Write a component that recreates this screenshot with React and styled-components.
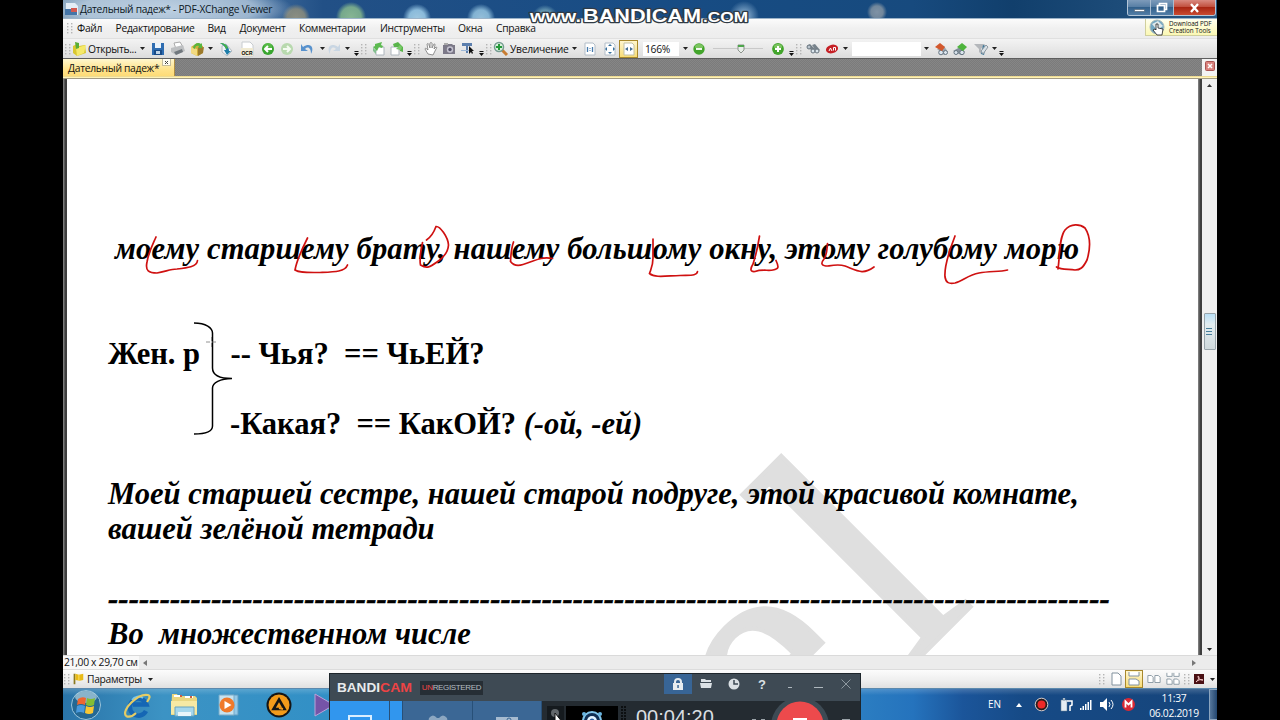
import React from 'react';
import styled, { createGlobalStyle } from 'styled-components';

const GlobalStyle = createGlobalStyle`
  * { box-sizing: border-box; }
  body { margin: 0; background: #000; overflow: hidden; }
  svg { display: block; flex: none; }
`
const Screen = styled.div`
  position: relative;
  width: 1280px;
  height: 720px;
  padding: 0 63px;
  background: #000;
  overflow: hidden;
  font-family: 'Open Sans', 'Noto Sans', sans-serif;
  font-size: 10.3px;
  letter-spacing: -0.3px;
  color: #111;
`
const Desktop = styled.div`
  display: flex;
  flex-direction: column;
  width: 1154px;
  height: 720px;
`
const TitleBar = styled.div`
  display: flex;
  justify-content: space-between;
  height: 19px;
  padding-right: 1px;
  border-bottom: 1px solid #9cb3c8;
  background:
    radial-gradient(ellipse 125px 26px at 105px 9px, rgba(214,228,240,.8), rgba(214,228,240,.6) 70%, transparent),
    radial-gradient(circle at 233px 18px, #8c8f83 0, #7d857f 9px, transparent 14px),
    radial-gradient(circle at 288px 17px, #86b593 0, #76a88c 10px, transparent 15px),
    radial-gradient(circle at 354px 18px, #9dc6df 0, #8abada 8px, transparent 14px),
    radial-gradient(circle at 418px 18px, #94bed9 0, #82b2d2 8px, transparent 14px),
    radial-gradient(circle at 482px 18px, #719eb6 0, #5f91ad 8px, transparent 13px),
    radial-gradient(circle at 681px 16px, #9dc0dc 0, transparent 15px),
    radial-gradient(circle at 814px 12px, #7f92a5 0, #71879c 6px, transparent 10px),
    linear-gradient(90deg, #7596b4 0, #416d9d 190px, #225086 260px, #174c84 600px, #174a7e 850px, #113f6c 950px, #275784 1154px);
`
const TitleText = styled.div`
  display: flex;
  align-items: center;
  gap: 2px;
  height: 18px;
  padding-left: 2px;
  color: #0b1723;
  font-size: 10.2px;
  letter-spacing: -0.27px;
  white-space: nowrap;
`
const WindowButtons = styled.div`
  display: flex;
  height: 16px;
  border: 1px solid #b4c6d8;
  border-top: 0;
  border-radius: 0 0 3px 3px;
  overflow: hidden;
`
const WindowButton = styled.div`
  display: flex;
  align-items: center;
  justify-content: center;
  width: ${p => p.$close ? 41 : 23}px;
  border-right: ${p => p.$close ? 0 : '1px solid #a9bdd1'};
  background: ${p => p.$close
    ? 'linear-gradient(#d98a80, #c2503f 45%, #a92613 50%, #c94b31)'
    : 'linear-gradient(#7d9bba, #587fa5 45%, #32608b 50%, #527ea7)'};
`
const MenuBar = styled.div`
  display: flex;
  height: 20px;
  background: linear-gradient(#fbfbfb, #f0f0f0 50%, #ededed);
  border-bottom: 1px solid #e0e0e0;
`
const MenuItem = styled.div`
  width: ${p => p.$w}px;
  line-height: 19px;
  white-space: nowrap;
`
const Promo = styled.div`
  display: flex;
  gap: 3px;
  width: 72px;
  height: 17px;
  margin-left: auto;
  padding-left: 3px;
  border: 1px solid #d0cf9e;
  border-top: 0;
  border-right: 0;
  background: linear-gradient(#fffff0, #fbf8b4);
  font-size: 6.3px;
  line-height: 7px;
  letter-spacing: -0.05px;
  white-space: nowrap;
`
const PromoText = styled.div`
  padding-top: 1px;
`
const ToolBar = styled.div`
  display: flex;
  align-items: center;
  height: 19px;
  background: linear-gradient(#f3f3f3, #e6e6e6 60%, #dcdcdc);
`
const Slot = styled.div`
  display: flex;
  flex: none;
  align-items: center;
  justify-content: center;
  width: ${p => p.$w}px;
  height: 18px;
  ${p => p.$active && `
    border: 1px solid #a8882c;
    background: linear-gradient(#fff6cf, #f8dc76);
  `}
`
const ToolLabel = styled.div`
  flex: none;
  width: ${p => p.$w}px;
  padding-left: 2px;
  line-height: 18px;
  white-space: nowrap;
`
const Field = styled.div`
  flex: none;
  width: ${p => p.$w}px;
  height: 14px;
  margin-left: ${p => p.$gap || 0}px;
  padding-left: 2px;
  background: #fff;
  line-height: 14px;
`
const TabStrip = styled.div`
  display: flex;
  justify-content: space-between;
  height: 18px;
  border-top: 1px solid #5e5e5e;
  background: repeating-conic-gradient(#7b7b7b 0 25%, #868686 0 50%) 0 0 / 2px 2px;
`
const Tab = styled.div`
  display: flex;
  justify-content: space-between;
  width: 112px;
  padding-left: 5px;
  padding-right: 3px;
  background: linear-gradient(#fff7cf, #ffe38c 60%, #fddb77);
  border-right: 1px solid #b18f43;
  line-height: 18px;
  white-space: nowrap;
`
const TabClose = styled.div`
  display: flex;
  align-items: center;
  justify-content: center;
  width: 9px;
  height: 7px;
  border: 1px solid #c5bd9c;
  border-top: 0;
  background: #fffdf2;
`
const StripClose = styled.div`
  display: flex;
  align-items: center;
  justify-content: center;
  width: 15px;
  height: 17px;
  padding-bottom: 3px;
  background: #f3f3f3;
`
const TabLine = styled.div`
  height: 3px;
  border-top: 1px solid #eedb92;
  border-bottom: 1px solid #a39c85;
  background: #fff3b8;
`
const Viewer = styled.div`
  display: flex;
  height: 576px;
`
const Edge = styled.div`
  width: ${p => p.$w}px;
  background: linear-gradient(90deg, #8b8b8b, #3e3e3e 60%, #3e3e3e);
`
const Page = styled.div`
  position: relative;
  width: 1131px;
  padding: 153px 0 0 41px;
  background: #fff;
  overflow: hidden;
`
const Overlay = styled.svg`
  position: absolute;
  top: 0;
  left: 0;
`
const Line = styled.div`
  position: relative;
  height: 35px;
  padding-left: ${p => p.$indent || 0}px;
  font-family: 'Liberation Serif', serif;
  font-size: 30.6px;
  font-weight: bold;
  font-style: ${p => p.$italic ? 'italic' : 'normal'};
  letter-spacing: ${p => p.$ls || 0}px;
  line-height: 35px;
  color: #000;
  white-space: pre;
`
const Dashes = styled(Line)`
  -webkit-text-stroke: 0.5px #000;
`
const ScrollBar = styled.div`
  display: flex;
  flex-direction: column;
  align-items: center;
  justify-content: space-between;
  width: 15px;
  padding: 4px 0;
  background: #f0f0f0;
`
const Thumb = styled.div`
  display: flex;
  align-items: center;
  justify-content: center;
  width: 12px;
  height: 37px;
  margin-top: -72px;
  border: 1px solid #98a4aa;
  border-radius: 1px;
  background: linear-gradient(#b9dff6, #e3edf0 30%, #cfd9dc);
`
const StatusBar = styled.div`
  display: flex;
  align-items: center;
  height: 14px;
  border-top: 1px solid #dadada;
  background: #ececec;
`
const StatusSize = styled.div`
  width: 76px;
  padding-left: 1px;
  background: #f8f8f8;
  line-height: 13px;
  white-space: nowrap;
`
const OptionsBar = styled.div`
  display: flex;
  align-items: center;
  height: 19px;
  border-top: 1px solid #dcdcdc;
  background: linear-gradient(#fcfcfc, #eee 60%, #e0e0e0);
`
const Spacer = styled.div`
  flex: 1;
`
const TaskBar = styled.div`
  display: flex;
  align-items: center;
  height: 32px;
  border-top: 1px solid #5c89ad;
  background:
    linear-gradient(rgba(255,255,255,.18), transparent 20%),
    linear-gradient(90deg, #2a74a8 0, #3c93c4 100px, #3290c6 260px, #2c7fc2 790px, #2573bd 850px, #1b559a 900px, #164a86 960px, #16457b 1140px);
`
const TaskIcon = styled.div`
  display: flex;
  flex: none;
  justify-content: center;
  width: ${p => p.$w}px;
`
const Language = styled.div`
  width: 28px;
  color: #fff;
  font-size: 10px;
  line-height: 20px;
  padding-bottom: 1px;
  letter-spacing: 0;
`
const Clock = styled.div`
  width: 58px;
  padding: 2px 0 0 4px;
  color: #fff;
  line-height: 15px;
  text-align: center;
  white-space: nowrap;
  letter-spacing: -0.3px;
`
const ShowDesktop = styled.div`
  width: 8px;
  height: 31px;
  margin-left: 8px;
  border: 1px solid #8ba5bf;
  border-right: 0;
  background: linear-gradient(90deg, #56779c, #23466f);
`
const Watermark = styled.svg`
  position: absolute;
  top: 2px;
  left: 520px;
  letter-spacing: 0;
`
const Recorder = styled.div`
  position: absolute;
  top: 673px;
  left: 329px;
  width: 532px;
  height: 60px;
  border: 1px solid #1d252b;
  background: #242b31;
  letter-spacing: 0;
`
const RecorderHeader = styled.div`
  display: flex;
  align-items: center;
  height: 27px;
  padding-left: 7px;
  background: #3e4a54;
`
const Unregistered = styled.div`
  width: 63px;
  height: 14px;
  margin: 0 0 0 7px;
  background: #262e35;
  color: #b5bcc1;
  font: 8px/14px 'Liberation Sans', sans-serif;
  letter-spacing: -0.35px;
  text-align: center;
  span { color: #ed4545; }
`
const HeaderButton = styled.div`
  display: flex;
  align-items: center;
  justify-content: center;
  width: 28px;
  height: 20px;
  align-self: flex-start;
  background: ${p => p.$active ? '#386596' : 'transparent'};
  color: #dbe1e5;
  font: bold 13px 'Liberation Sans', sans-serif;
`
const RecorderBody = styled.div`
  display: flex;
  height: 31px;
`
const ModeTab = styled.div`
  display: flex;
  justify-content: center;
  width: ${p => p.$w}px;
  padding-top: 14px;
  border-right: 1px solid #285078;
  background: ${p => p.$on ? '#3196ee' : '#3b6795'};
`
const Preview = styled.div`
  display: flex;
  gap: 2px;
  width: 93px;
  padding: 5px 0 0 5px;
`
const Timer = styled.div`
  width: 84px;
  padding: 4px 0 0 1px;
  color: #d9dee1;
  font: 20px/24px 'Liberation Sans', sans-serif;
  white-space: nowrap;
`

const Grip = () => (
  <svg width="6" height="12" fill="#b5b5b5">
    {[1, 4, 7, 10].map(y => <React.Fragment key={y}><rect x="0" y={y} width="1.4" height="1.4" /><rect x="4" y={y} width="1.4" height="1.4" /></React.Fragment>)}
  </svg>
)
const Arrow = () => <svg width="5" height="3"><path d="M0 0h5L2.5 3z" fill="#222" /></svg>
const More = () => <svg width="5" height="18"><path d="M.5 11h4v1h-4zM0 13h5L2.500 16z" fill="#111" /></svg>

const icons = {
  folder: <><path d="M1 5l4-2 2 2 6-1 1 8-9 3-4-3z" fill="#d9c72f" /><path d="M4 7l10-3-2 8-7 3z" fill="#f5e96a" /><path d="M3 1l4 1v5l-3 1z" fill="#58ad35" /></>,
  save: <><path d="M2 2h12v12H2z" fill="#2e6cb0" /><path d="M5 2h6v5H5z" fill="#e9f2fa" /><path d="M4 9h8v5H4z" fill="#194b87" /><path d="M6 10h4v3H6z" fill="#bfd4e8" /></>,
  print: <><path d="M4 2l6-1 3 5-7 2z" fill="#fff" stroke="#aaa" /><path d="M1 7l12-3 2 6-9 4-5-3z" fill="#bdbfc1" /><path d="M4 11l8-3 1 3-7 3z" fill="#70777d" /></>,
  export: <><path d="M2 6l6-4 6 3v7l-6 3-6-3z" fill="#d0ad38" /><path d="M2 6l6 2v7l-6-3z" fill="#f2d980" /><path d="M9 7l6-1-1 6-5 3z" fill="#9c7a2c" /><path d="M4 7c1-5 6-6 8-4l1-1v5H9l1-2C8 4 6 5 6 8z" fill="#57b53e" /></>,
  convert: <><path d="M5 5l4-2 6 7-5 5-5-4z" fill="#eef2f6" stroke="#b4bac0" /><path d="M3 2c6 0 9 4 9 8h2l-4 4-3-5h2c0-3-3-5-6-7z" fill="#1e7da8" /><path d="M3 2c4 0 7 2 8 5l-2 1C8 5 6 3 3 2z" fill="#46b344" /></>,
  ocr: <><path d="M3 1h8l3 3v11H3z" fill="#fff" stroke="#c8ccd0" /><path d="M2 7h12v8H2z" fill="#f0ead2" /><text x="2.500" y="13.500" fontSize="6" letterSpacing="0" fontWeight="bold" fontFamily="Liberation Sans, sans-serif" textLength="11" lengthAdjust="spacingAndGlyphs">OCR</text></>,
  back: <><circle cx="8" cy="8" r="6" fill="#39a52f" /><circle cx="8" cy="6" r="4" fill="#71cf59" opacity=".5" /><path d="M12 8H5m3-3L5 8l3 3" stroke="#fff" strokeWidth="2" fill="none" /></>,
  forward: <><circle cx="8" cy="8" r="6" fill="#b8d9ae" /><path d="M4 8h7M8 5l3 3-3 3" stroke="#f4fbf1" strokeWidth="2" fill="none" /></>,
  undo: <path d="M2 3v7h7L6 8c3-3 6-1 6 5 4-7-1-12-8-7z" fill="#5791cd" />,
  redo: <path d="M14 3v7H7l3-2c-3-3-6-1-6 5-4-7 1-12 8-7z" fill="#c9d6e3" />,
  rotL: <><path d="M6 6h8v8H6z" fill="#fff" stroke="#aeb6bd" /><path d="M5 3l7-2-1 3 2 1-1 2-3-1-2 4-4-4 2-1z" fill="#5cba50" /><path d="M3 5v5l3 3V9L4 8z" fill="#84bf90" /></>,
  rotR: <><path d="M2 6h8v8H2z" fill="#fff" stroke="#aeb6bd" /><path d="M4 3l5-2 5 5v5l-3-1-1-4H5z" fill="#58b44a" /><path d="M7 8l5 1 1-3-2-2z" fill="#79ca68" /></>,
  hand: <path d="M5 13L2 8c0-1 1-1 3 1L4 3c1-1 2 0 2 1l1 3V2c1-1 2 0 2 0v5l2-4c1 0 1 0 1 1l-1 4 2-2c1 0 1 1 0 2l-2 4-1 2z" fill="#fff" stroke="#777" strokeWidth=".8" />,
  camera: <><path d="M2 4h4l1-1h4l1 1h2v9H2z" fill="#7c7988" /><circle cx="9" cy="8.500" r="3.200" fill="#c4c2cf" /><circle cx="9" cy="8.500" r="1.700" fill="#55536a" /><path d="M3 2h4v2H3z" fill="#aaa" /></>,
  select: <><path d="M2 2h10v3H8v7H6V5H2z" fill="#5c7fae" /><path d="M1 9h10v1H1z" fill="#9cb7d7" /><path d="M9 5v8l2-2 1 2 1-1-1-2h2z" fill="#111" /></>,
  zoom: <><path d="M9 9l5 5" stroke="#c87d33" strokeWidth="3" /><circle cx="6" cy="6" r="4.500" fill="#d8f1dc" stroke="#759b91" strokeWidth="1.500" /><path d="M3 6h6M6 3v6" stroke="#24993a" strokeWidth="2" /></>,
  actual: <><path d="M3 2h8l2 2v10H3z" fill="#fff" stroke="#b2bdc8" /><path d="M5.500 6v5M10.500 6v5" stroke="#477bad" strokeWidth="1.300" /><path d="M8 7v1M8 9v1" stroke="#477bad" /></>,
  fit: <><path d="M3 2h8l2 2v10H3z" fill="#fff" stroke="#b2bdc8" /><path d="M8 3l2 2H6zM8 13l2-2H6zM3 8l2-2v4zM13 8l-2-2v4z" fill="#38719f" /></>,
  width: <><path d="M3 2h8l2 2v10H3z" fill="#fff" stroke="#c2c1a8" /><path d="M4 8l3-2v4zM12 8L9 6v4z" fill="#476f92" /></>,
  minus: <><circle cx="8" cy="8" r="5.700" fill="#43a52c" /><ellipse cx="8" cy="5.500" rx="4" ry="2.500" fill="#a1db83" opacity=".6" /><path d="M5 8h6" stroke="#fff" strokeWidth="1.800" /></>,
  plus: <><circle cx="8" cy="8" r="5.900" fill="#43a52c" /><ellipse cx="8" cy="5.500" rx="4" ry="2.500" fill="#a1db83" opacity=".6" /><path d="M5 8h6M8 5v6" stroke="#fff" strokeWidth="2" /></>,
  find: <><path d="M2 5l3-2 5 5-2 3zM7 4l3-1 5 6-3 2z" fill="#77828b" /><circle cx="4" cy="6" r="2" fill="#bac4cd" stroke="#68747e" /><circle cx="8" cy="10" r="2" fill="#dce6ed" stroke="#68747e" /><circle cx="12" cy="10" r="2" fill="#dce6ed" stroke="#68747e" /></>,
  ask: <><ellipse cx="8" cy="8" rx="6.200" ry="4.200" transform="rotate(-15 8 8)" fill="#c51f25" /><path d="M5 10l1.500-3L8 10M9.500 9.500v-3h2v3" fill="none" stroke="#fff" strokeWidth="1" /></>,
  findRed: <><path d="M4 8l7-3 4 6-4 3z" fill="#9ba4ac" /><circle cx="8" cy="11.500" r="2.300" fill="#dbe5ee" stroke="#667581" /><circle cx="12.500" cy="11.500" r="2" fill="#dbe5ee" stroke="#667581" /><path d="M2 6l5-4 5 4-3 4z" fill="#d3582d" /></>,
  findGreen: <><path d="M1 10l7-4 5 5-4 3z" fill="#84909a" /><circle cx="4" cy="11.500" r="2" fill="#dbe5ee" stroke="#667581" /><circle cx="10" cy="11.500" r="2.200" fill="#dbe5ee" stroke="#667581" /><path d="M5 6l5-4 5 4-4 4z" fill="#4eb43c" /></>,
  tools: <><path d="M1 3h11L8 8v5L6 11V8z" fill="#b4b7bb" /><path d="M10 4l3 1-2 9-3-1z" fill="#3d7799" /><path d="M8 10l5-6 2 2-5 7z" fill="#d9e2e8" stroke="#9099a1" /></>,
  flag: <><path d="M4 2v12" stroke="#8b7a21" strokeWidth="2" /><path d="M5 2l4 1 5-1v7l-4 1-5-1z" fill="#e8ba17" /><path d="M9 3v7" stroke="#ffe46a" /></>,
  page: <path d="M4 2h6l3 3v9H4z" fill="#fff" stroke="#82929e" />,
  pages: <path d="M3 1v4h10V1M3 14V8h7l3 2v4z" fill="#fff" stroke="#82929e" />,
  facing: <path d="M1 4h4l2 2v6H1zM9 4h4l2 2v6H9z" fill="#fff" stroke="#82929e" />,
  facingRow: <path d="M1 1v4h6V1M9 1v4h6V1M1 14V8h4l2 2v4zM9 14V8h4l2 2v4z" fill="#fff" stroke="#82929e" />,
  pdf: <><path d="M3 3h10v10H3z" fill="#4a1014" /><path d="M5 11c3-3 4-5 2-6 0 3 2 4 5 4-3-1-5 0-7 2z" fill="none" stroke="#f2c6c6" /></>,
}

const Icon = ({ name, size = 16 }) => <svg width={size} height={size} viewBox="0 0 16 16">{icons[name]}</svg>

const menu = [['Файл', 38.5], ['Редактирование', 92], ['Вид', 32], ['Документ', 59.5], ['Комментарии', 81], ['Инструменты', 78], ['Окна', 38], ['Справка', 50]]

const tools = [
  ['grip', 10], ['folder', 13], ['text', 50, 'Открыть...'], ['arrow', 12], ['save', 20], ['print', 19], ['export', 19], ['arrow', 8],
  ['convert', 22], ['ocr', 22], ['back', 20], ['forward', 18], ['undo', 22], ['arrow', 8], ['redo', 16], ['arrow', 10], ['more', 8],
  ['grip', 8], ['rotL', 19], ['rotR', 19], ['more', 6], ['grip', 10], ['hand', 17], ['camera', 20], ['select', 18], ['more', 8],
  ['grip', 8], ['zoom', 15], ['text', 61, 'Увеличение'], ['arrow', 10], ['actual', 22], ['fit', 18], ['width', 19, true],
  ['field', 36, '166%', 5], ['arrow', 12], ['minus', 16], ['slider', 62], ['plus', 18], ['more', 8], ['grip', 8],
  ['find', 19], ['ask', 20], ['arrow', 6], ['field', 69, '', 4], ['arrow', 10], ['findRed', 19], ['findGreen', 20], ['tools', 22], ['arrow', 5], ['more', 8],
]

const Tool = ({ item: [kind, w, extra, gap] }) => {
  if (kind === 'text') return <ToolLabel $w={w}>{extra}</ToolLabel>
  if (kind === 'field') return <Field $w={w} $gap={gap}>{extra}</Field>
  return (
    <Slot $w={w} $active={extra}>
      {kind === 'grip' && <Grip />}
      {kind === 'arrow' && <Arrow />}
      {kind === 'more' && <More />}
      {kind === 'slider' && (
        <svg width="50" height="12">
          <path d="M0 5.500h50" stroke="#c9c9c9" />
          <path d="M25 2h6v5l-3 3-3-3z" fill="#e9eee9" stroke="#8d948d" />
          <path d="M25 2h6v2h-6z" fill="#4ea54b" />
        </svg>
      )}
      {icons[kind] && <Icon name={kind} />}
    </Slot>
  )
}

const ink = [
  'M156 237C152 246 149 251 147 262C145 271 149 273 157 273C165 272 170 269 177 269C187 268 197 267 197.500 260.500',
  'M307.500 238C302 249 297 259 295 270C299 273 307 272.500 320 272.500C334 272 345 272 347.500 265',
  'M426.500 240C431 237 434 232 436 226.500C440 226 448 237 448.500 245C448 253 443 258 437 262C430 267 427 269 420.500 265C419 258 421 252 422.500 242.500',
  'M513.500 242C511 249 511 255 510.500 261.500C513 265 518 266 523 264.500C533 262 540 256 552.500 258.500',
  'M653 239V258C653 266 651 269 649.500 273.500C655 278 665 276 680 275.500C690 275 697 276 697.500 271.500',
  'M759.500 236C758 246 756 255 753 264C750 269 750 272 755 271.500C762 269 768 271 773 270C779 269 779 267 776 260.500',
  'M827.500 243.500C827 249 827 255 824 259C820 264 822 266 828 266C834 265 839 264 845 266C858 271 863 275 874 267',
  'M955 236C950 249 944 266 945 277C946 283 949 284 955 283C963 281 968 275 979 273C990 271 999 272 1007.500 270',
  'M1058 269C1060 255 1059 238 1065 230C1071 223 1080 224 1085 228C1091 237 1090 250 1087 260C1083 268 1080 270 1075 270C1068 269 1061 270 1056.500 267',
]

const TaskIcons = () => (
  <>
    <TaskIcon $w={46}>
      <svg width="32" height="32" viewBox="0 0 32 32">
        <circle cx="16" cy="16" r="14.500" fill="#246894" stroke="#9bc5dc" />
        <ellipse cx="16" cy="8" rx="11" ry="6" fill="#b5d4e3" opacity=".7" />
        <path d="M8 10q4-3 8-1l-1 7q-4-2-8 0z" fill="#ef6631" /><path d="M17 9q4 2 8 0l-1 7q-4 2-8 0z" fill="#83bd35" />
        <path d="M7 17q4-2 8 0l-1 7q-4-2-8 0z" fill="#4999dd" /><path d="M16 17q4 2 8 0l-1 7q-4 2-8 0z" fill="#fac732" />
      </svg>
    </TaskIcon>
    <TaskIcon $w={56}>
      <svg width="28" height="28" viewBox="0 0 28 28">
        <path d="M23 20A8.500 8.500 0 1 1 23.500 13.500H10" fill="none" stroke="#1566b4" strokeWidth="4.500" />
        <path d="M9 9a8 8 0 0 1 11-2" fill="none" stroke="#76c7ef" strokeWidth="2" />
        <path d="M3 25C-2 19 15 2 25 4c3 1 1 4-1 7M3 25c4 2 8-1 10-3" fill="none" stroke="#e5cc65" strokeWidth="2.200" />
      </svg>
    </TaskIcon>
    <TaskIcon $w={38}>
      <svg width="29" height="28" viewBox="0 0 29 28">
        <path d="M2 3h5l1 2h17l2 2v17H1z" fill="#e9d680" /><path d="M4 5h7M15 6h8" stroke="#fff" strokeWidth="2" /><path d="M10 5h2M20 6h2" stroke="#ce5c43" strokeWidth="2" />
        <path d="M1 10h26v13H1z" fill="#f6e9a4" /><path d="M5 16h19v9H5z" fill="#a5d7ed" stroke="#69a4bf" /><path d="M8 21h13v4H8z" fill="#e8f5fa" />
      </svg>
    </TaskIcon>
    <TaskIcon $w={50}>
      <svg width="24" height="24" viewBox="0 0 24 24">
        <path d="M8 2h14v20H8z" fill="#94c9e8" stroke="#619cc1" /><path d="M3 2h15v20H3z" fill="#c5e2f0" stroke="#75aac8" />
        <circle cx="11" cy="12" r="7.500" fill="#ef792b" /><path d="M8.500 8l7 4-7 4z" fill="#fff" />
      </svg>
    </TaskIcon>
    <TaskIcon $w={52}>
      <svg width="28" height="28" viewBox="0 0 28 28">
        <circle cx="14" cy="14" r="12.500" fill="#151515" /><circle cx="14" cy="14" r="10.500" fill="#f39b1b" />
        <path d="M14 8.500l5.500 9.500h-11z" fill="none" stroke="#151515" strokeWidth="2.600" /><path d="M14 17l4 1" stroke="#f39b1b" strokeWidth="2" />
      </svg>
    </TaskIcon>
    <TaskIcon $w={36}>
      <svg width="24" height="24"><path d="M4 1l19 11L4 23z" fill="#7554a8" stroke="#b9a3d8" /></svg>
    </TaskIcon>
  </>
)

const App = () => (
  <Screen>
    <GlobalStyle />
    <Desktop>
      <TitleBar>
        <TitleText>
          <svg width="13" height="13" viewBox="0 0 13 13"><path d="M1 0h9l3 3v9H1z" fill="#e3edf6" /><path d="M0 6h12v6H0z" fill="#4475a8" /><path d="M6 5h6v4H6z" fill="#d35950" /></svg>
          Дательный падеж* - PDF-XChange Viewer
        </TitleText>
        <WindowButtons>
          <WindowButton><svg width="13" height="10"><path d="M1.500 6.500h10v2h-10z" fill="#fff" stroke="#46596d" strokeWidth=".6" /></svg></WindowButton>
          <WindowButton><svg width="14" height="12"><path d="M4.500 3V1.500h7v6H10M2.500 3.500h7v6h-7z" fill="none" stroke="#fff" strokeWidth="1.700" /></svg></WindowButton>
          <WindowButton $close><svg width="12" height="10"><path d="M2 1l7 8M9 1L2 9" stroke="#fff" strokeWidth="2.300" /></svg></WindowButton>
        </WindowButtons>
      </TitleBar>
      <MenuBar>
        <Slot $w={14}><Grip /></Slot>
        {menu.map(([label, w]) => <MenuItem key={label} $w={w}>{label}</MenuItem>)}
        <Promo>
          <svg width="17" height="17" viewBox="0 0 17 17"><circle cx="8" cy="8" r="7" fill="#71a7c2" stroke="#aab9bb" /><path d="M3 5l6-3 5 5-6 4z" fill="#dfe8e9" /><path d="M8 16l-4-5 2-1 1 1V5h2v4l5 1-1 6z" fill="#fff" stroke="#222" strokeWidth=".8" /></svg>
          <PromoText>Download PDF<br />Creation Tools</PromoText>
        </Promo>
      </MenuBar>
      <ToolBar>{tools.map((item, i) => <Tool key={i} item={item} />)}</ToolBar>
      <TabStrip>
        <Tab>Дательный падеж*<TabClose><svg width="5" height="5"><path d="M1 1l3 3M4 1L1 4" stroke="#444" /></svg></TabClose></Tab>
        <StripClose><svg width="10" height="10"><rect x=".5" y=".5" width="9" height="9" rx="1" fill="#da817c" stroke="#aa5553" /><path d="M3 3l4 4M7 3L3 7" stroke="#fff" strokeWidth="1.500" /></svg></StripClose>
      </TabStrip>
      <TabLine />
      <Viewer>
        <Edge $w={4} />
        <Page>
          <Overlay width="1131" height="576" viewBox="67 79 1131 576" fontFamily="Liberation Serif, serif" fill="#dfdfdf" stroke="#dfdfdf" strokeWidth="4" letterSpacing="0">
            <text transform="translate(781 793) rotate(-45)" fontSize="332">e</text>
            <text transform="translate(907.500 670) rotate(-45)" fontSize="347">l</text>
          </Overlay>
          <Line $italic $indent={7} $ls={0.12}>моему старшему брату, нашему большому окну, этому голубому морю</Line>
          <Line /><Line />
          <Line $ls={-0.03}>Жен. р    -- Чья?  == ЧьЕЙ?</Line>
          <Line />
          <Line $indent={122} $ls={-0.05}>-Какая?  == КакОЙ? <i>(-ой, -ей)</i></Line>
          <Line />
          <Line $italic $ls={-0.01}>Моей старшей сестре, нашей старой подруге, этой красивой комнате,</Line>
          <Line $italic>вашей зелёной тетради</Line>
          <Line />
          <Dashes $italic $ls={0.14}>{'-'.repeat(97)}</Dashes>
          <Line $italic $ls={0.03}>Во  множественном числе</Line>
          <Overlay width="1131" height="576" viewBox="67 79 1131 576" fill="none">
            <path d="M194 323C206 323 212.500 328 212.500 333V368C212.500 375 220 378.500 232 378.500C220 378.500 212.500 383 212.500 388V426C212.500 431 206 434 194 434" stroke="#000" strokeWidth="1.500" />
            <path d="M206 342h11M211.500 337v11" stroke="#777" strokeWidth=".8" strokeDasharray="4 2" />
            {ink.map(d => <path key={d} d={d} stroke="#cf1111" strokeWidth="1.700" strokeLinecap="round" />)}
          </Overlay>
        </Page>
        <Edge $w={4} />
        <ScrollBar>
          <svg width="5" height="4"><path d="M0 4h5L2.500 1z" fill="#333" /></svg>
          <Thumb><svg width="7" height="9"><path d="M0 1.500h6M0 4.500h6M0 7.500h6" stroke="#487f9c" /></svg></Thumb>
          <Arrow />
        </ScrollBar>
      </Viewer>
      <StatusBar>
        <StatusSize>21,00 x 29,70 см</StatusSize>
        <Slot $w={12}><svg width="4" height="6"><path d="M4 0v6L0 3z" fill="#777" /></svg></Slot>
        <Spacer />
        <Slot $w={46}><svg width="4" height="6"><path d="M0 0v6l4-3z" fill="#777" /></svg></Slot>
      </StatusBar>
      <OptionsBar>
        <Slot $w={8}><Grip /></Slot>
        <Slot $w={14}><Icon name="flag" size={14} /></Slot>
        <ToolLabel $w={60}>Параметры</ToolLabel>
        <Slot $w={10}><Arrow /></Slot>
        <Spacer />
        <Slot $w={10}><Grip /></Slot>
        <Slot $w={18}><Icon name="page" /></Slot>
        <Slot $w={18} $active><Icon name="pages" /></Slot>
        <Slot $w={21}><Icon name="facing" size={14} /></Slot>
        <Slot $w={18}><Icon name="facingRow" size={14} /></Slot>
        <Slot $w={9}><Grip /></Slot>
        <Slot $w={16}><Icon name="pdf" /></Slot>
        <Slot $w={10}><Arrow /></Slot>
      </OptionsBar>
      <TaskBar>
        <TaskIcons />
        <Spacer />
        <Language>EN</Language>
        <svg width="6" height="4"><path d="M0 4h6L3 0z" fill="#fff" /></svg>
        <TaskIcon $w={38}><svg width="15" height="15"><circle cx="7.500" cy="7.500" r="6.300" fill="#271b1c" stroke="#d8cdcc" /><circle cx="7.500" cy="7.500" r="4" fill="#ee2928" /></svg></TaskIcon>
        <TaskIcon $w={11}><svg width="14" height="14"><path d="M2 2h6v11H2zM4 0h2v2H4z" fill="#e5edf3" stroke="#657c91" strokeWidth=".5" /><path d="M8 3h5v4l-2 1v5" stroke="#fff" strokeWidth="1.500" fill="none" /></svg></TaskIcon>
        <TaskIcon $w={30}><svg width="12" height="10" fill="#fff"><path d="M0 8h1.500v2H0zM2.500 6H4v4H2.500zM5 4h1.500v6H5zM7.500 2H9v8H7.500zM10 0h1.500v10H10z" /></svg></TaskIcon>
        <TaskIcon $w={12}><svg width="14" height="13"><path d="M0 4h3l4-4v13L3 9H0z" fill="#fff" /><path d="M9 4q2 2.500 0 5M11 2q4 4.500 0 9" stroke="#fff" fill="none" /></svg></TaskIcon>
        <TaskIcon $w={30}><svg width="13" height="13"><circle cx="6.500" cy="6.500" r="6.500" fill="#da2834" /><path d="M3.500 9.500v-6l3 3 3-3v6" stroke="#fff" strokeWidth="1.800" fill="none" /></svg></TaskIcon>
        <Clock>11:37<br />06.02.2019</Clock>
        <ShowDesktop />
      </TaskBar>
    </Desktop>
    <Watermark width="240" height="26" fontFamily="Liberation Sans, sans-serif" fontWeight="bold" fill="#fff" stroke="#303b45" strokeWidth="2.500" paintOrder="stroke" strokeLinejoin="round">
      <text x="10" y="19.500" fontSize="17" textLength="51" lengthAdjust="spacingAndGlyphs">www.</text>
      <text x="63" y="19.500" fontSize="18" textLength="118" lengthAdjust="spacingAndGlyphs">BANDICAM</text>
      <text x="183" y="19.500" fontSize="14" textLength="45" lengthAdjust="spacingAndGlyphs">.COM</text>
    </Watermark>
    <Recorder>
      <RecorderHeader>
        <svg width="76" height="17" fontFamily="Liberation Sans, sans-serif" fontWeight="bold" fontSize="12.500">
          <text x="0" y="13" fill="#e8ebed" textLength="43" lengthAdjust="spacingAndGlyphs">BANDI</text>
          <text x="43" y="13" fill="#ee4344" textLength="32" lengthAdjust="spacingAndGlyphs">CAM</text>
        </svg>
        <Unregistered><span>UN</span>REGISTERED</Unregistered>
        <Spacer />
        <HeaderButton $active><svg width="12" height="13"><path d="M1 5h10v7H1z" fill="#e6ebef" /><path d="M3 6V4a3 3 0 0 1 6 0v2" fill="none" stroke="#e6ebef" strokeWidth="2" /><path d="M5.300 7h1.500v3H5.300z" fill="#386596" /></svg></HeaderButton>
        <HeaderButton><svg width="12" height="10" fill="#dbe1e5"><path d="M1 0h4l1 1h5v2H1zM0 4h12l-1 5H1z" /></svg></HeaderButton>
        <HeaderButton><svg width="12" height="12"><circle cx="6" cy="6" r="5.500" fill="#dbe1e5" /><path d="M6 2v4h4" stroke="#3e4a54" strokeWidth="1.500" fill="none" /></svg></HeaderButton>
        <HeaderButton>?</HeaderButton>
        <HeaderButton><svg width="5" height="10"><path d="M0 8.500h4" stroke="#aeb7bd" /></svg></HeaderButton>
        <HeaderButton><svg width="9" height="10"><path d="M0 8.500h9" stroke="#aeb7bd" /></svg></HeaderButton>
        <HeaderButton><svg width="10" height="10"><path d="M.5.500l9 9M9.500.500l-9 9" stroke="#8d989f" /></svg></HeaderButton>
      </RecorderHeader>
      <RecorderBody>
        <ModeTab $on $w={60}><svg width="24" height="18"><path d="M1 1h22v16H1z" fill="none" stroke="#dbeeff" strokeWidth="2" /></svg></ModeTab>
        <ModeTab $on $w={13} />
        <ModeTab $w={70}><svg width="22" height="14"><path d="M2 3q4-5 8 0h2q4-5 8 0l2 11H0z" fill="#8ca7c1" /></svg></ModeTab>
        <ModeTab $w={69}><svg width="24" height="14"><path d="M1 2h22v12H1z" fill="#a6bbd0" /><circle cx="14" cy="5" r="2" fill="none" stroke="#3b6795" /></svg></ModeTab>
        <Preview>
          <svg width="17" height="26"><path d="M0 0h17v26H0z" fill="#151a1e" /><circle cx="8" cy="7" r="4" fill="#62676b" /><path d="M8 7v14l3-4h5z" fill="#fff" stroke="#111" /></svg>
          <svg width="52" height="26"><path d="M0 0h52v26H0z" fill="#000" /><circle cx="26" cy="15" r="9" fill="#102e53" stroke="#83c7ec" strokeWidth="2" /><circle cx="26" cy="15" r="5" fill="#e4f4ff" /><circle cx="26" cy="15" r="2.500" fill="#275b9c" /><circle cx="18" cy="8" r="2" fill="#69b4df" /><circle cx="34" cy="8" r="2" fill="#69b4df" /></svg>
          <svg width="8" height="26" fill="#0c0f11">{[0, 3, 6, 9, 12, 15].map(y => <path key={y} d={`M1 ${y}h2v2H1zM4 ${y}h2v2H4z`} />)}</svg>
        </Preview>
        <Timer>00:04:20</Timer>
        <svg width="140" height="31">
          <path d="M33 18h4v3h-4zM42 18h4v3h-4zM123 18h8v3h-8z" fill="#9ba3a8" />
          <circle cx="81" cy="25" r="29" fill="#3d4a54" /><circle cx="81" cy="24" r="23.500" fill="#ed4a4c" /><path d="M74 17h14v12H74z" fill="#fff" />
        </svg>
      </RecorderBody>
    </Recorder>
  </Screen>
)

export default App
